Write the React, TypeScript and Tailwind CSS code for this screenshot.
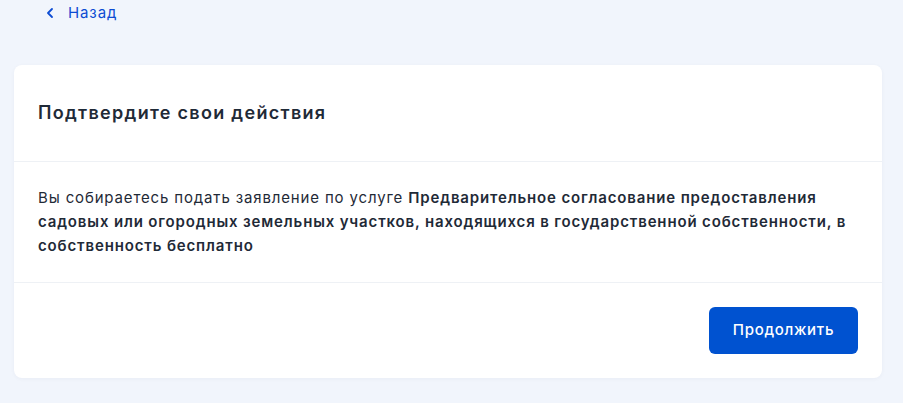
import { ChevronLeft } from "lucide-react"

export default function App() {
  return (
    <div className="min-h-[403px] w-full bg-[#f1f5fc] px-[14px] font-['Inter','Noto_Sans',sans-serif] text-[#1f2a37]">
      <a href="#" className="flex h-[26px] items-center gap-[10px] pl-[28px] text-[15px] tracking-[0.9px] text-[#0d4cd3]">
        <ChevronLeft className="h-[16px] w-[16px]" strokeWidth={2.75} />
        <span>Назад</span>
      </a>

      <div className="mt-[39px] w-[868px] rounded-[8px] bg-white shadow-[0_1px_4px_rgba(0,20,70,0.04)]">
        <div className="border-b border-[#eef1f5] px-[24px] py-[36px]">
          <h1 className="text-[18px] leading-[24px] font-semibold tracking-[1.3px]">Подтвердите свои действия</h1>
        </div>

        <div className="border-b border-[#eef1f5] px-[24px] py-[24px]">
          <p className="text-[15px] leading-[24px] tracking-[0.85px]">
            Вы собираетесь подать заявление по услуге{" "}
            <b className="font-semibold">
              Предварительное согласование предоставления садовых или огородных земельных участков,
              находящихся в государственной собственности, в собственность бесплатно
            </b>
          </p>
        </div>

        <div className="flex justify-end px-[24px] py-[24px]">
          <button className="h-[47px] w-[149px] rounded-[6px] bg-[#0052d0] text-[15px] font-medium tracking-[0.7px] text-white">
            Продолжить
          </button>
        </div>
      </div>
    </div>
  )
}
